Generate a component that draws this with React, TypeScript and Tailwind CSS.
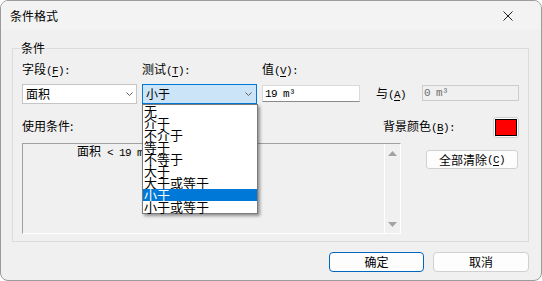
import React from "react";

const A = ({ children, className = "" }: { children: React.ReactNode; className?: string }) => (
  <span className={"font-['Liberation_Mono',monospace] text-[11px] tracking-[-0.6px] " + className}>{children}</span>
);

const Mn = ({ k, colon = false }: { k: string; colon?: boolean }) => (
  <A>
    (<span className="underline underline-offset-[2px]">{k}</span>){colon ? ":" : ""}
  </A>
);

const Chev = () => (
  <svg width="7" height="4" viewBox="0 0 7 4" className="shrink-0">
    <path d="M0.5 0.5L3.5 3.5L6.5 0.5" stroke="#5f5f5f" strokeWidth="1" fill="none" />
  </svg>
);

const items = ["无", "介于", "不介于", "等于", "不等于", "大于", "大于或等于", "小于", "小于或等于"];

export default function App() {
  return (
    <div className="w-[542px] h-[281px] bg-[#f0f0f0] border border-[#9b9b9b] rounded-[8px] overflow-hidden flex flex-col font-['Noto_Sans_CJK_SC',sans-serif] text-[12px] text-black leading-[16px]">
      <div className="h-[29px] bg-[#f3f3f3] flex items-center justify-between pl-[9px] pr-[28px] shrink-0">
        <span>条件格式</span>
        <svg width="10" height="10" viewBox="0 0 10 10">
          <path d="M0.5 0.5L9.5 9.5M9.5 0.5L0.5 9.5" stroke="#1b1b1b" strokeWidth="1" />
        </svg>
      </div>
      <div className="flex-1 flex flex-col pl-[11px] pr-[12px]">
        <fieldset className="mt-[10px] border border-[#dcdcdc] pl-[9px] pr-[9px] pt-[5px] pb-[7px]">
          <legend className="px-[1px] ml-[-2px]">条件</legend>
          <div className="flex">
            <span className="w-[120px]">
              字段<Mn k="F" colon />
            </span>
            <span className="w-[120px]">
              测试<Mn k="T" colon />
            </span>
            <span>
              值<Mn k="V" colon />
            </span>
          </div>
          <div className="flex items-start mt-[5px] h-[20px]">
            <div className="w-[115px] h-[20px] bg-white border border-[#c5c5c5] flex items-center justify-between pl-[3px] pr-[3px]">
              <span>面积</span>
              <Chev />
            </div>
            <div className="relative ml-[5px] w-[115px] h-[20px]">
              <div className="w-full h-full bg-[#cce4f7] border border-[#0078d7] flex items-center justify-between pl-[3px] pr-[4px]">
                <span>小于</span>
                <Chev />
              </div>
              <div className="absolute top-[20px] left-0 w-[116px] z-10 bg-white border border-[#7a7a7a] shadow-[2px_2px_3px_rgba(0,0,0,0.4)] text-[13px] leading-[12px]">
                {items.map((t, i) => (
                  <div
                    key={i}
                    className={
                      i === 7
                        ? "relative h-[12px] pl-[1px] bg-[#0078d7] text-white whitespace-nowrap"
                        : "relative h-[12px] pl-[1px] whitespace-nowrap"
                    }
                  >
                    {t}
                  </div>
                ))}
              </div>
            </div>
            <div className="ml-[5px] w-[98px] h-[17px] mt-[1px] bg-white border border-[#dadada] border-b-[#8a8a8a] flex items-center pl-[2px]">
              <A>19 m³</A>
            </div>
            <span className="ml-[16px] mt-[1px]">
              与<Mn k="A" />
            </span>
            <div className="ml-auto w-[97px] h-[16px] mt-[1px] bg-[#f0f0f0] border border-[#cccccc] flex items-center pl-[1px] text-[#6d6d6d]">
              <A>0 m³</A>
            </div>
          </div>
          <div className="flex items-start justify-between mt-[13px] h-[21px]">
            <span className="mt-[1px]">使用条件:</span>
            <div className="flex items-start">
              <span className="mt-[1px]">
                背景颜色<Mn k="B" colon />
              </span>
              <div className="ml-[38px] w-[26px] h-[21px] bg-[#fdfdfd] border border-[#d0d0d0] rounded-[3px] p-[1px]">
                <div className="w-full h-full bg-[#ff0000] border border-black"></div>
              </div>
            </div>
          </div>
          <div className="flex items-start mt-[5px]">
            <div className="w-[379px] h-[91px] flex border-t border-l border-t-[#a0a0a0] border-l-[#a0a0a0] border-r border-b border-r-white border-b-white">
              <div className="flex-1 pl-[54px] leading-[14px] whitespace-nowrap">
                面积<A> &lt; 19 m³</A>
              </div>
              <div className="w-[16px] border-l border-white flex flex-col items-center justify-between pt-[7px] pb-[6px]">
                <svg width="9" height="5" viewBox="0 0 9 5">
                  <path d="M0 5L4.5 0L9 5Z" fill="#a3a3a3" />
                </svg>
                <svg width="9" height="5" viewBox="0 0 9 5">
                  <path d="M0 0L4.5 5L9 0Z" fill="#a3a3a3" />
                </svg>
              </div>
            </div>
            <div className="ml-auto mr-[1px] mt-[7px] w-[92px] h-[19px] bg-[#fdfdfd] border border-[#d0d0d0] rounded-[3px] flex items-center justify-center">
              全部清除<Mn k="C" />
            </div>
          </div>
        </fieldset>
        <div className="mt-[10px] flex justify-end gap-[9px]">
          <div className="w-[95px] h-[20px] bg-[#fdfdfd] border border-[#0067c0] rounded-[4px] flex items-center justify-center">
            确定
          </div>
          <div className="w-[96px] h-[20px] bg-[#fdfdfd] border border-[#d0d0d0] rounded-[4px] flex items-center justify-center">
            取消
          </div>
        </div>
      </div>
    </div>
  );
}
